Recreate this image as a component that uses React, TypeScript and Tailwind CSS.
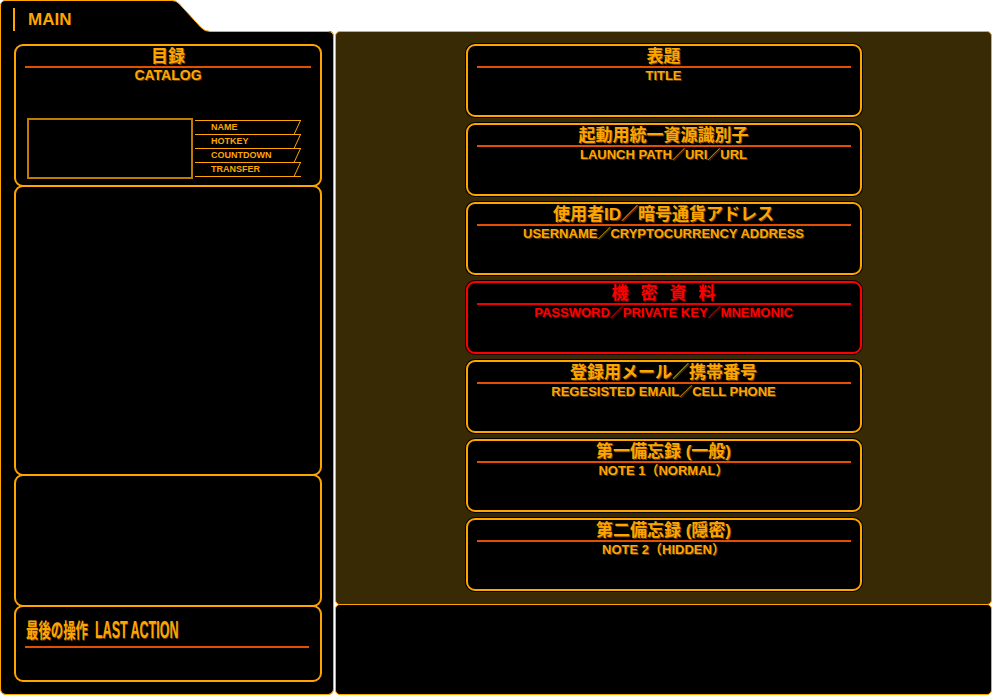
import React from "react";

const ORANGE = "#ffa500";

type CardProps = { title: string; sub: string; red?: boolean };

function RightCard({ title, sub, red }: CardProps) {
  return (
    <div
      className={
        red
          ? "h-[73px] w-[396px] shrink-0 rounded-[9px] border-2 border-[#ff0000] bg-black shadow-[0_0_0_1px_#1a0000]"
          : "h-[73px] w-[396px] shrink-0 rounded-[9px] border-2 border-[#ffa500] bg-black shadow-[0_0_0_1px_#000]"
      }
    >
      {red ? (
        <div className="h-[20px] pl-[12px] pt-[2px] text-center text-[17px] font-bold leading-[18px] tracking-[12px] text-[#ff0000] [text-shadow:1px_1px_0_#6a0000]">
          機密資料
        </div>
      ) : (
        <div className="h-[20px] pt-[2px] text-center text-[17px] font-bold leading-[18px] text-[#ffa500] [text-shadow:1px_1px_0_#6b4300]">
          {title}
        </div>
      )}
      <div className={red ? "mx-[9px] h-[2px] bg-[#ee0000]" : "mx-[9px] h-[2px] bg-[#e34f00]"} />
      <div
        className={
          red
            ? "text-center text-[13px] font-bold leading-[15px] text-[#ff0000] [text-shadow:1px_1px_0_#5a0000]"
            : "text-center text-[13px] font-bold leading-[15px] text-[#ffa500] [text-shadow:1px_1px_0_#5a3800]"
        }
      >
        {sub}
      </div>
    </div>
  );
}

function LabelRow({ label }: { label: string }) {
  return (
    <div className="relative h-[14px] w-[106px] border-t border-[#ffa500]">
      <span className="block pl-[16px] text-[9px] font-bold leading-[13px] text-[#ffa500]">{label}</span>
      <svg className="absolute right-0 top-[-1px]" width="9" height="15" viewBox="0 0 9 15">
        <line x1="8.5" y1="0.5" x2="2" y2="14.5" stroke={ORANGE} strokeWidth="1" />
      </svg>
    </div>
  );
}

export default function App() {
  return (
    <div className="flex h-[695px] w-[992px] bg-white font-['Liberation_Sans','Noto_Sans_CJK_JP',sans-serif]">
      {/* Left column */}
      <div className="relative flex h-[695px] w-[334px] shrink-0 flex-col">
        <svg className="pointer-events-none absolute left-0 top-0 z-10" width="334" height="40" viewBox="0 0 334 40">
          <path
            d="M0.5,40 L0.5,6 Q0.5,0.5 6,0.5 L172,0.5 Q176,0.5 179,3.5 L201,27.5 Q205,31.5 210,31.5 L328,31.5 Q333.5,31.5 333.5,37 L333.5,40"
            fill="#000"
            stroke={ORANGE}
            strokeWidth="1"
          />
        </svg>
        <div className="relative z-20 flex h-[31px] items-start pl-[13px] pt-[8px]">
          <div className="h-[23px] w-[2px] bg-[#ffa500]" />
          <span className="ml-[13px] mt-[2px] text-[17px] font-bold leading-[20px] text-[#ffa500]">MAIN</span>
        </div>
        <div className="flex flex-1 flex-col rounded-b-[6px] rounded-tr-[5px] border-x border-b border-[#ffa500] bg-black pb-[12px] pl-[13px] pr-[11px] pt-[13px]">
          {/* Catalog */}
          <div className="relative z-[1] flex h-[143px] shrink-0 flex-col rounded-[9px] border-2 border-[#ffa500] bg-black">
            <div className="h-[20px] pt-[2px] text-center text-[17px] font-bold leading-[18px] text-[#ffa500] [text-shadow:1px_1px_0_#6b4300]">
              目録
            </div>
            <div className="mx-[9px] h-[2px] bg-[#e34f00]" />
            <div className="text-center text-[14px] font-bold leading-[15px] text-[#ffa500] [text-shadow:1px_1px_0_#5a3800]">
              CATALOG
            </div>
            <div className="ml-[11px] mt-[35px] flex">
              <div className="h-[61px] w-[166px] border-2 border-[#c07c00] bg-black" />
              <div className="ml-[2px] mt-[2px] flex flex-col">
                <LabelRow label="NAME" />
                <LabelRow label="HOTKEY" />
                <LabelRow label="COUNTDOWN" />
                <LabelRow label="TRANSFER" />
                <div className="w-[106px] border-t border-[#ffa500]" />
              </div>
            </div>
          </div>
          <div className="relative z-[2] -mt-[2px] flex-1 rounded-[9px] border-2 border-[#ffa500] bg-black" />
          <div className="relative z-[3] -mt-[2px] h-[133px] shrink-0 rounded-[9px] border-2 border-[#ffa500] bg-black" />
          <div className="relative z-[4] -mt-[2px] flex h-[77px] shrink-0 flex-col rounded-[9px] border-2 border-[#ffa500] bg-black">
            <div className="mt-[11px] flex h-[26px] items-center pl-[10px] text-[#ffa500]">
              <div className="w-[69px]">
                <span className="inline-block origin-left scale-x-[0.62] whitespace-nowrap text-[20px] font-bold leading-[26px] [text-shadow:1px_1px_0_#6b4300]">
                  最後の操作
                </span>
              </div>
              <div>
                <span className="inline-block origin-left scale-x-[0.52] whitespace-nowrap text-[24px] font-bold leading-[26px] [text-shadow:1px_1px_0_#6b4300]">
                  LAST ACTION
                </span>
              </div>
            </div>
            <div className="ml-[9px] mr-[11px] mt-[2px] h-[2px] bg-[#e34f00]" />
          </div>
        </div>
      </div>

      {/* Right column */}
      <div className="ml-px mt-[31px] flex flex-1 flex-col">
        <div className="flex h-[574px] shrink-0 flex-col items-center gap-[6px] rounded-[5px] border border-[#ffa500] bg-[#372a05] pt-[12px]">
          <RightCard title="表題" sub="TITLE" />
          <RightCard title="起動用統一資源識別子" sub="LAUNCH PATH／URI／URL" />
          <RightCard title="使用者ID／暗号通貨アドレス" sub="USERNAME／CRYPTOCURRENCY ADDRESS" />
          <RightCard title="機密資料" sub="PASSWORD／PRIVATE KEY／MNEMONIC" red />
          <RightCard title="登録用メール／携帯番号" sub="REGESISTED EMAIL／CELL PHONE" />
          <RightCard title="第一備忘録 (一般)" sub="NOTE 1（NORMAL）" />
          <RightCard title="第二備忘録 (隠密)" sub="NOTE 2（HIDDEN）" />
        </div>
        <div className="-mt-px flex-1 rounded-[5px] border border-[#ffa500] bg-black" />
      </div>
    </div>
  );
}
